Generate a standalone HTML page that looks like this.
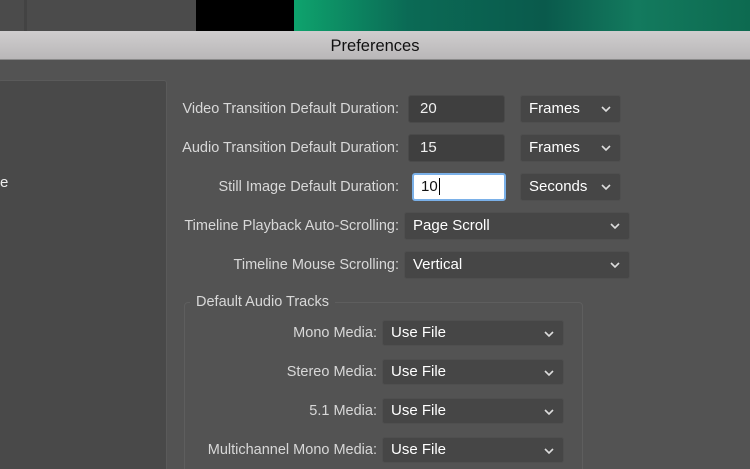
<!DOCTYPE html>
<html style="overflow:hidden;height:469px"><head><style>
html,body{margin:0;width:750px;height:469px;overflow:hidden}
body{background:#535353;font-family:"Liberation Sans",sans-serif;position:relative}
div{position:absolute;box-sizing:border-box}
.lab{color:#d8d8d8;font-size:14.5px;text-align:right;line-height:18px}
.inp{background:#3f3f3f;border:1px solid #4a4a4a;border-radius:3px;color:#f0f0f0;font-size:15px;padding-left:11px;line-height:26px}
.sel{background:#464646;border:1px solid #4f4f4f;border-radius:3px;color:#fff;font-size:15px;padding-left:8px;line-height:26px}
.sel svg{position:absolute;right:9px;top:10px}
</style></head><body>
<div style="left:0;top:0;width:196px;height:32px;background:#4b4b4b"></div>
<div style="left:24px;top:0;width:3px;height:32px;background:#434343"></div>
<div style="left:196px;top:0;width:98px;height:32px;background:#000"></div>
<div style="left:294px;top:0;width:456px;height:32px;background:linear-gradient(90deg,#0ea36d 0%,#0b6a55 25%,#0a5a4c 55%,#137a5e 75%,#0d6a50 100%)"></div>
<div style="left:0;top:31px;width:750px;height:29px;background:linear-gradient(#cfcdce,#b9b7b8);border-bottom:1px solid #8a8a8a;text-align:center;font-size:16.5px;line-height:31px;color:#111">Preferences</div>
<div style="left:-2px;top:80px;width:169px;height:400px;background:#494949;border:1px solid #5a5a5a;border-radius:3px"></div>
<div style="left:0;top:174px;color:#eee;font-size:15px">e</div>

<div class="lab" style="right:351px;top:100px">Video Transition Default Duration:</div>
<div class="inp" style="left:408px;top:95px;width:97px;height:28px">20</div>
<div class="sel" style="left:520px;top:95px;width:101px;height:28px">Frames<svg width="10" height="7"><path d="M1 1L5 5L9 1" stroke="#ddd" stroke-width="1.6" fill="none"/></svg></div>

<div class="lab" style="right:351px;top:139px">Audio Transition Default Duration:</div>
<div class="inp" style="left:408px;top:134px;width:97px;height:28px">15</div>
<div class="sel" style="left:520px;top:134px;width:101px;height:28px">Frames<svg width="10" height="7"><path d="M1 1L5 5L9 1" stroke="#ddd" stroke-width="1.6" fill="none"/></svg></div>

<div class="lab" style="right:351px;top:178px">Still Image Default Duration:</div>
<div class="inp" style="left:412px;top:173px;width:94px;height:28px;background:#fff;border:2px solid #7ab0e8;color:#111;padding-left:7px;line-height:24px">10<span style="border-left:1px solid #000;margin-left:1px"></span></div>
<div class="sel" style="left:520px;top:173px;width:101px;height:28px">Seconds<svg width="10" height="7"><path d="M1 1L5 5L9 1" stroke="#ddd" stroke-width="1.6" fill="none"/></svg></div>

<div class="lab" style="right:351px;top:217px">Timeline Playback Auto-Scrolling:</div>
<div class="sel" style="left:404px;top:212px;width:226px;height:28px">Page Scroll<svg width="10" height="7"><path d="M1 1L5 5L9 1" stroke="#ddd" stroke-width="1.6" fill="none"/></svg></div>

<div class="lab" style="right:351px;top:256px">Timeline Mouse Scrolling:</div>
<div class="sel" style="left:404px;top:251px;width:226px;height:28px">Vertical<svg width="10" height="7"><path d="M1 1L5 5L9 1" stroke="#ddd" stroke-width="1.6" fill="none"/></svg></div>

<div style="left:184px;top:302px;width:399px;height:190px;border:1px solid #5e5e5e;border-radius:4px"></div>
<div class="lab" style="left:190px;top:293px;background:#535353;padding:0 6px;text-align:left">Default Audio Tracks</div>

<div class="lab" style="right:373px;top:324px">Mono Media:</div>
<div class="sel" style="left:382px;top:320px;width:182px;height:26px;line-height:24px">Use File<svg width="10" height="7"><path d="M1 1L5 5L9 1" stroke="#ddd" stroke-width="1.6" fill="none"/></svg></div>
<div class="lab" style="right:373px;top:363px">Stereo Media:</div>
<div class="sel" style="left:382px;top:359px;width:182px;height:26px;line-height:24px">Use File<svg width="10" height="7"><path d="M1 1L5 5L9 1" stroke="#ddd" stroke-width="1.6" fill="none"/></svg></div>
<div class="lab" style="right:373px;top:402px">5.1 Media:</div>
<div class="sel" style="left:382px;top:398px;width:182px;height:26px;line-height:24px">Use File<svg width="10" height="7"><path d="M1 1L5 5L9 1" stroke="#ddd" stroke-width="1.6" fill="none"/></svg></div>
<div class="lab" style="right:373px;top:441px">Multichannel Mono Media:</div>
<div class="sel" style="left:382px;top:437px;width:182px;height:26px;line-height:24px">Use File<svg width="10" height="7"><path d="M1 1L5 5L9 1" stroke="#ddd" stroke-width="1.6" fill="none"/></svg></div>
</body></html>
